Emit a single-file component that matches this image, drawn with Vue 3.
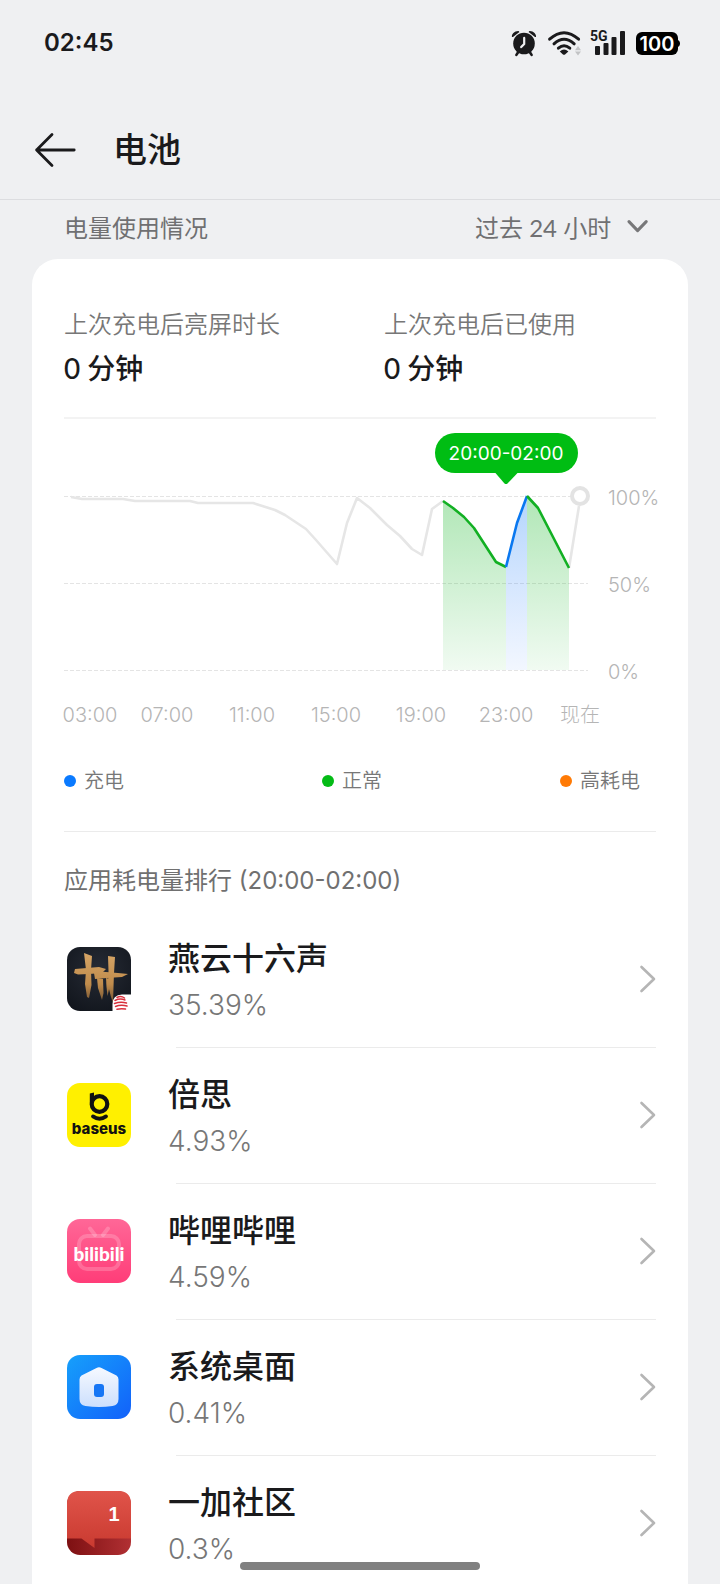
<script setup>
import { ref } from 'vue'

const period = ref('24h')

const gridLines = [
  { y: 77, label: '100%' },
  { y: 164, label: '50%' },
  { y: 251, label: '0%' },
]

const hours = [
  { x: 26, label: '03:00' },
  { x: 103, label: '07:00' },
  { x: 188, label: '11:00' },
  { x: 272, label: '15:00' },
  { x: 357, label: '19:00' },
  { x: 442, label: '23:00' },
  { x: 516, label: '现在' },
]

const toPoints = (list) => list.map((p) => p.join(',')).join(' ')
const toArea = (list) =>
  toPoints([[list[0][0], 251], ...list, [list[list.length - 1][0], 251]])

const idleBefore = [
  [7, 78], [18, 80], [59, 80], [71, 82], [126, 82], [134, 84], [189, 84],
  [211, 91], [221, 96], [242, 110], [252, 121], [273, 145], [283, 104],
  [293, 79], [306, 89], [323, 106], [336, 117], [348, 130], [358, 136],
  [368, 90], [379, 82],
]
const idleAfter = [[505, 149], [515, 87]]

const segments = [
  {
    kind: 'normal',
    points: [[379, 82], [389, 89], [400, 98], [410, 109], [421, 126], [432, 143], [442, 148]],
  },
  { kind: 'charge', points: [[442, 148], [453, 104], [463, 77]] },
  { kind: 'normal', points: [[463, 77], [474, 89], [489, 118], [505, 149]] },
]

const legend = [
  { kind: 'charge', label: '充电' },
  { kind: 'normal', label: '正常' },
  { kind: 'high', label: '高耗电' },
]

const apps = [
  { id: 'yanyun', name: '燕云十六声', share: '35.39%' },
  { id: 'baseus', name: '倍思', share: '4.93%' },
  { id: 'bilibili', name: '哔哩哔哩', share: '4.59%' },
  { id: 'launcher', name: '系统桌面', share: '0.41%' },
  { id: 'oneplus', name: '一加社区', share: '0.3%' },
]
</script>

<template>
  <div class="screen">
    <div class="status">
      <time class="clock">02:45</time>
      <div class="status-icons">
        <svg width="26" height="26" viewBox="0 0 26 26" aria-label="闹钟">
          <circle cx="14" cy="13.500" r="10.8" fill="#1a1a1c" />
          <path d="M2 7.100C1.200 3.900 4.600.700 8.600.900L9.400 1.900 3 7.100ZM26 7.100C26.600 3.900 23.400.700 19.400.900L18.600 1.900 25 7.100Z" fill="#1a1a1c" />
          <path d="M8.600 21.500 6.400 24.900M19.400 21.500l2.200 3.400" stroke="#1a1a1c" stroke-width="2.6" stroke-linecap="round" />
          <path d="M14.200 7.900v6l-3 3.200" fill="none" stroke="#eff0f2" stroke-width="2.2" stroke-linecap="round" stroke-linejoin="round" />
        </svg>
        <svg width="34" height="26" viewBox="0 0 34 26" aria-label="无线网络">
          <g fill="none" stroke="#1a1a1c" stroke-width="3" stroke-linecap="round">
            <path d="M3.6 9.200Q18 -3.800 32.6 9.200" />
            <path d="M8 13.800Q18 4.600 28.2 13.800" />
            <path d="M12.4 18.200Q18 13.200 23.8 18.200" />
          </g>
          <path d="M13.800 21.400Q18 17.400 22.400 21.400L19 24.400Q18 25.200 17 24.400Z" fill="#1a1a1c" />
          <path d="M29 20.200 32 16l3 4.200ZM29 21.400l3 4.200 3-4.200Z" fill="#c2c3c5" />
        </svg>
        <svg width="36" height="26" viewBox="0 0 36 26" aria-label="5G 信号">
          <text x="0" y="11" class="net">5G</text>
          <g fill="#1a1a1c">
            <rect x="5" y="16" width="5" height="9" rx="1" />
            <rect x="13.5" y="13" width="5" height="12" rx="1" />
            <rect x="21.5" y="7" width="5" height="18" rx="1" />
            <rect x="30" y="1" width="5" height="24" rx="1" />
          </g>
        </svg>
        <svg width="44" height="26" viewBox="0 0 44 26" aria-label="电量">
          <rect x="0" y="2" width="42" height="23" rx="6" fill="#000" />
          <path d="M41 10c4 0 4 7 0 7Z" fill="#000" />
          <text x="21" y="21" class="level">100</text>
        </svg>
      </div>
    </div>

    <header class="bar">
      <button class="back" type="button" aria-label="返回">
        <svg width="42" height="36" viewBox="0 0 42 36">
          <path d="M18 2.600 2.600 18 18 33.400M2.600 18H40.200" fill="none" stroke="#1a1a1c" stroke-width="2.8" stroke-linecap="round" stroke-linejoin="round" />
        </svg>
      </button>
      <h1>电池</h1>
    </header>

    <main class="content">
      <div class="section">
        <label for="period">电量使用情况</label>
        <div class="picker">
          <select id="period" v-model="period">
            <option value="24h">过去 24 小时</option>
          </select>
          <svg class="caret" width="22" height="14" viewBox="0 0 22 14" aria-hidden="true">
            <path d="M3 1.600 11.600 10.600l8.600-9" fill="none" stroke="#777779" stroke-width="3" stroke-linecap="round" stroke-linejoin="round" />
          </svg>
        </div>
      </div>

      <section class="card">
        <dl class="stats">
          <div>
            <dt>上次充电后亮屏时长</dt>
            <dd>0 分钟</dd>
          </div>
          <div>
            <dt>上次充电后已使用</dt>
            <dd>0 分钟</dd>
          </div>
        </dl>

        <svg class="chart" viewBox="0 0 592 311" role="img" aria-label="电量曲线">
          <defs>
            <linearGradient id="fill-normal" gradientUnits="userSpaceOnUse" x1="0" y1="77" x2="0" y2="251">
              <stop offset="0" stop-color="#10b522" stop-opacity="0.33" />
              <stop offset="1" stop-color="#10b522" stop-opacity="0.06" />
            </linearGradient>
            <linearGradient id="fill-charge" gradientUnits="userSpaceOnUse" x1="0" y1="77" x2="0" y2="251">
              <stop offset="0" stop-color="#0a78f5" stop-opacity="0.31" />
              <stop offset="1" stop-color="#2a78ff" stop-opacity="0.06" />
            </linearGradient>
          </defs>
          <g v-for="line in gridLines" :key="line.y">
            <line class="grid" x1="0" x2="524" :y1="line.y + 0.5" :y2="line.y + 0.5" />
            <text class="tick" x="544" :y="line.y + 9">{{ line.label }}</text>
          </g>
          <polygon v-for="(s, i) in segments" :key="'a' + i" :points="toArea(s.points)" :fill="`url(#fill-${s.kind})`" />
          <polyline class="curve idle" :points="toPoints(idleBefore)" />
          <polyline class="curve idle" :points="toPoints(idleAfter)" />
          <polyline v-for="(s, i) in segments" :key="'l' + i" class="curve" :class="s.kind" :points="toPoints(s.points)" />
          <circle cx="516" cy="77" r="8" fill="#fff" stroke="#e3e3e3" stroke-width="4" />
          <rect x="371" y="14" width="143" height="40" rx="20" fill="#00bd13" />
          <path d="M431 53.500h23L443.500 64.400q-1.500 1.400-3 0Z" fill="#00bd13" />
          <text class="tip" x="442" y="41">20:00-02:00</text>
          <text v-for="h in hours" :key="h.x" class="hour" :x="h.x" y="303">{{ h.label }}</text>
        </svg>

        <ul class="legend">
          <li v-for="item in legend" :key="item.kind">
            <span class="dot" :class="item.kind"></span>{{ item.label }}
          </li>
        </ul>

        <h2>应用耗电量排行 (20:00-02:00)</h2>

        <ul class="apps">
          <li v-for="app in apps" :key="app.id">
            <a href="#" class="app">
              <svg v-if="app.id === 'yanyun'" class="icon" viewBox="0 0 64 64">
                <defs>
                  <radialGradient id="night" cx=".5" cy=".35" r=".75">
                    <stop offset="0" stop-color="#262b35" />
                    <stop offset="1" stop-color="#11151c" />
                  </radialGradient>
                  <linearGradient id="gold" gradientUnits="userSpaceOnUse" x1="0" y1="7" x2="0" y2="57">
                    <stop offset="0" stop-color="#d5a465" />
                    <stop offset=".6" stop-color="#c08c4c" />
                    <stop offset="1" stop-color="#6d4f30" />
                  </linearGradient>
                </defs>
                <rect width="64" height="64" rx="13" fill="url(#night)" />
                <g fill="url(#gold)">
                  <path d="M17 6l8 3-1 14 .5 15L22 51l-2-1-2-13 1-14Z" />
                  <path d="M41 9l7 1-1 16-.5 14L46 56l-2-6-3-12 .5-14Z" />
                  <path d="M30 31l6 1 .5 14L35 53l-2-6-2-6Z" />
                  <path d="M39 31l4 1-.500 8-2 9-1-9Z" />
                  <path d="M7 26l1-4 24-2 7 2-4 4-13 1-11 .5Z" />
                  <path d="M27 26l6-1.500 18 1.500 10 1-6 3-15 1-12 1Z" />
                </g>
                <path d="M64 47.500h-9Q45.500 48 45.500 57v7H64Z" fill="#fff" />
                <g fill="none" stroke="#d9303c" stroke-width="1.500" stroke-linecap="round">
                  <path d="M50 50.500q4-2 7.500.500" />
                  <path d="M48 53.500q5-2.500 10-.5" />
                  <path d="M47.500 56.500q6-2 12-.5" />
                  <path d="M48.500 59.500q5-2 11.500-.5" />
                  <path d="M50 62.200q4-1 8.500-.2" />
                </g>
              </svg>

              <svg v-else-if="app.id === 'baseus'" class="icon" viewBox="0 0 64 64">
                <rect width="64" height="64" rx="13" fill="#fff000" />
                <circle cx="32.500" cy="21" r="7.800" fill="none" stroke="#111" stroke-width="4.200" />
                <path d="M22.800 10.600 27 9.400V20h-4.200Z" fill="#111" />
                <path d="M26 33.400q6.500 4.600 13 0" fill="none" stroke="#111" stroke-width="3.800" stroke-linecap="round" />
                <text class="baseus" x="32" y="51">baseus</text>
              </svg>

              <svg v-else-if="app.id === 'bilibili'" class="icon" viewBox="0 0 64 64">
                <defs>
                  <linearGradient id="pink" x1="0" y1="0" x2="0" y2="1">
                    <stop offset="0" stop-color="#ff6797" />
                    <stop offset="1" stop-color="#ff3d78" />
                  </linearGradient>
                </defs>
                <rect width="64" height="64" rx="13" fill="url(#pink)" />
                <g fill="none" stroke="#fff" stroke-opacity=".2" stroke-width="4">
                  <rect x="12" y="17" width="40" height="33" rx="8" />
                  <path d="M23 9.500l5 6.500M41 9.500l-5 6.500" stroke-linecap="round" />
                </g>
                <text class="bili" x="32" y="42">bilibili</text>
              </svg>

              <svg v-else-if="app.id === 'launcher'" class="icon" viewBox="0 0 64 64">
                <defs>
                  <linearGradient id="sky" x1="0" y1="0" x2="1" y2="1">
                    <stop offset="0" stop-color="#16a0fb" />
                    <stop offset="1" stop-color="#1261fa" />
                  </linearGradient>
                  <linearGradient id="house" x1="0" y1="0" x2="0" y2="1">
                    <stop offset="0" stop-color="#f6f9ff" />
                    <stop offset="1" stop-color="#ccdffd" />
                  </linearGradient>
                </defs>
                <rect width="64" height="64" rx="13" fill="url(#sky)" />
                <path d="M29.500 13q2.500-1.600 5 0L49.500 20.500Q51.500 22 51.500 24.500V44q0 6-6 7Q32 53 18.500 51q-6-1-6-7V24.500q0-2.500 2-4Z" fill="url(#house)" />
                <rect x="27" y="29" width="10" height="13" rx="3" fill="#1676f5" />
              </svg>

              <svg v-else class="icon" viewBox="0 0 64 64">
                <defs>
                  <linearGradient id="red" x1="0" y1="0" x2="0" y2="1">
                    <stop offset="0" stop-color="#e0544a" />
                    <stop offset="1" stop-color="#c93a30" />
                  </linearGradient>
                  <linearGradient id="wine" x1="0" y1="0" x2="1" y2="0">
                    <stop offset="0" stop-color="#7d1012" />
                    <stop offset="1" stop-color="#b13033" />
                  </linearGradient>
                </defs>
                <rect width="64" height="64" rx="13" fill="url(#wine)" />
                <path d="M13 0H51Q64 0 64 13V47.500H27.500V57L14.500 47.500H0V13Q0 0 13 0Z" fill="url(#red)" />
                <text class="one" x="47" y="30">1</text>
              </svg>

              <span class="info">
                <span class="name">{{ app.name }}</span>
                <span class="share">{{ app.share }}</span>
              </span>
              <svg class="go" width="18" height="28" viewBox="0 0 18 28" aria-hidden="true">
                <path d="M3.500 2 16 14 3.500 26" fill="none" stroke="#b5b5b5" stroke-width="2.600" stroke-linecap="round" stroke-linejoin="round" />
              </svg>
            </a>
          </li>
        </ul>
      </section>
    </main>

    <div class="home"></div>
  </div>
</template>

<style>
html,
body {
  background: #eff0f2;
}
</style>

<style scoped>
.screen {
  height: 100vh;
  display: flex;
  flex-direction: column;
  overflow: hidden;
  background: #eff0f2;
  color: #1a1a1c;
  font-family: Inter, "Noto Sans CJK SC", sans-serif;
}

.status {
  flex: none;
  height: 86px;
  padding: 0 40px 0 44px;
  display: flex;
  align-items: center;
  justify-content: space-between;
}
.clock {
  font-size: 24px;
  line-height: 32px;
  font-weight: 600;
}
.status-icons {
  display: flex;
  gap: 10px;
}
.status-icons svg {
  display: block;
  overflow: visible;
}
.net {
  font: 700 14px Roboto, sans-serif;
  fill: #1a1a1c;
}
.level {
  font: 600 20px Inter, sans-serif;
  fill: #fff;
  text-anchor: middle;
}

.bar {
  flex: none;
  height: 114px;
  padding: 15px 34px 0;
  box-sizing: border-box;
  display: flex;
  align-items: center;
  gap: 37px;
  border-bottom: 1px solid #dcdde0;
}
.back {
  padding: 0;
  border: 0;
  background: none;
}
.back svg {
  display: block;
}
h1 {
  margin: 0;
  font-size: 34px;
  line-height: 48px;
  font-weight: 500;
}

.content {
  flex: 1;
  min-height: 0;
  overflow-y: auto;
  scrollbar-width: none;
}
.section {
  height: 59px;
  padding: 0 72px 3px 64px;
  box-sizing: border-box;
  display: flex;
  align-items: center;
  justify-content: space-between;
  font-family: Lato, "Noto Sans CJK SC", sans-serif;
  font-size: 24px;
  line-height: 32px;
  font-weight: 400;
  color: #707072;
}
.picker {
  position: relative;
}
.picker select {
  appearance: none;
  margin: 0;
  padding: 0 36px 0 0;
  border: 0;
  background: none;
  color: inherit;
  font: inherit;
}
.caret {
  position: absolute;
  right: 0;
  top: 8px;
  pointer-events: none;
}

.card {
  margin: 0 32px;
  padding: 50px 32px 0;
  border-radius: 26px 26px 0 0;
  background: #fff;
}
.stats {
  margin: 0;
  padding-bottom: 30px;
  display: grid;
  grid-template-columns: 320px 1fr;
  border-bottom: 2px solid #f3f3f3;
}
dt {
  font-size: 24px;
  line-height: 32px;
  font-weight: 350;
  color: #777;
}
dd {
  margin: 8px 0 0;
  font-family: Lato, "Noto Sans CJK SC", sans-serif;
  font-size: 28px;
  line-height: 38px;
  font-weight: 500;
}

.chart {
  display: block;
  width: 100%;
  overflow: visible;
}
.grid {
  stroke: #e4e4e4;
  stroke-width: 1;
  stroke-dasharray: 4 2;
}
.curve {
  fill: none;
  stroke-width: 2.6;
  stroke-linejoin: round;
}
.curve.idle {
  stroke: #e6e6e6;
}
.curve.normal {
  stroke: #12b023;
}
.curve.charge {
  stroke: #0a78f0;
}
.tick,
.hour {
  font-size: 20px;
  font-weight: 300;
  fill: #b5b5b5;
}
.hour,
.tip {
  text-anchor: middle;
}
.tip {
  font-size: 19px;
  fill: #fff;
}

.legend {
  list-style: none;
  margin: 0;
  padding: 36px 16px 35px 0;
  display: grid;
  grid-template-columns: 1fr auto 1fr;
  border-bottom: 1px solid #ebebeb;
  font-size: 20px;
  line-height: 30px;
  font-weight: 350;
  color: #777;
}
.legend li {
  display: flex;
  align-items: center;
  gap: 8px;
}
.legend li:last-child {
  justify-self: end;
}
.dot {
  width: 12px;
  height: 12px;
  border-radius: 50%;
}
.dot.charge {
  background: #0a7aff;
}
.dot.normal {
  background: #04bb16;
}
.dot.high {
  background: #ff7a05;
}

h2 {
  margin: 33px 0 14px;
  font-size: 24px;
  line-height: 32px;
  font-weight: 400;
  color: #707070;
}

.apps {
  list-style: none;
  margin: 0;
  padding: 0;
}
.app {
  position: relative;
  height: 136px;
  padding-left: 3px;
  display: flex;
  align-items: center;
  color: inherit;
  text-decoration: none;
}
.apps li:not(:last-child) .app::after {
  content: "";
  position: absolute;
  left: 112px;
  right: 0;
  bottom: -1px;
  height: 1px;
  background: #ebebeb;
}
.icon {
  flex: none;
  width: 64px;
  height: 64px;
}
.info {
  flex: 1;
  margin-left: 37px;
  padding-top: 4px;
  display: flex;
  flex-direction: column;
  gap: 4px;
}
.name {
  font-size: 32px;
  line-height: 44px;
  font-weight: 500;
}
.share {
  font-size: 28px;
  line-height: 40px;
  font-weight: 300;
  color: #777;
}
.go {
  flex: none;
}
.baseus {
  font: 800 15px Inter, sans-serif;
  fill: #111;
  text-anchor: middle;
}
.bili {
  font: 900 19px Lato, sans-serif;
  fill: #fff;
  text-anchor: middle;
}
.one {
  font: 700 20px "Liberation Sans", sans-serif;
  fill: #fff;
  text-anchor: middle;
}

.home {
  position: fixed;
  left: 33.333%;
  right: 33.333%;
  bottom: 14px;
  height: 8px;
  border-radius: 4px;
  background: #808080;
}
</style>
